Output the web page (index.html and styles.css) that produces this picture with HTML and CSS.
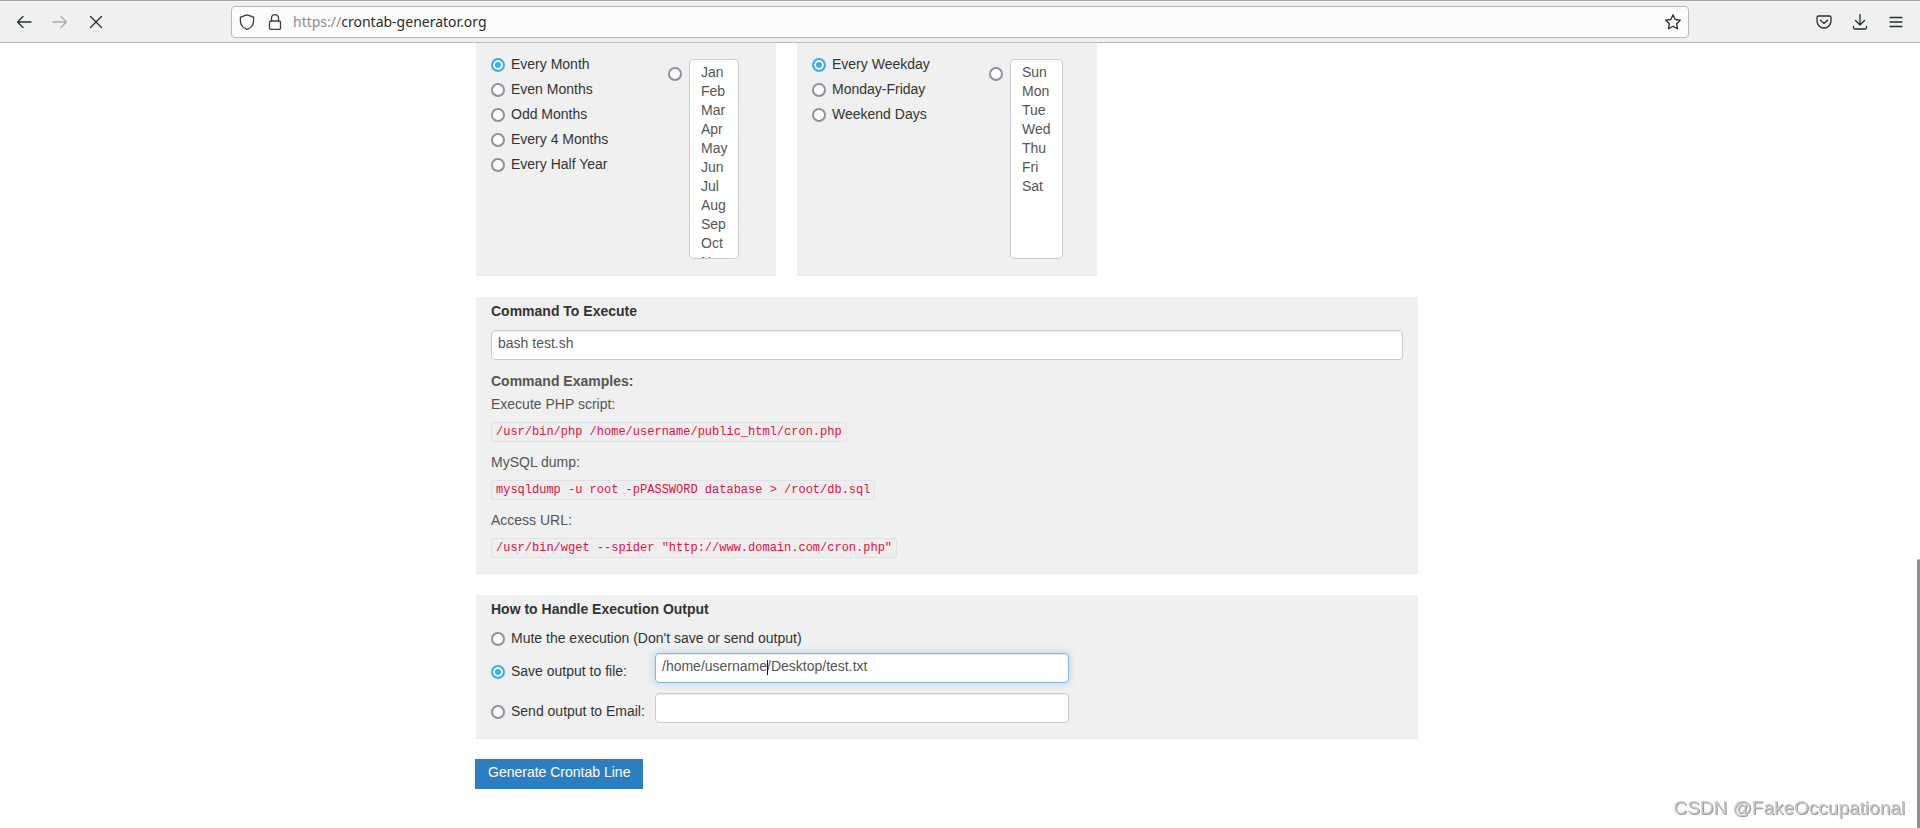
FILE: index.html
```html
<!DOCTYPE html>
<html lang="en">
<head>
<meta charset="utf-8">
<title>Crontab Generator</title>
<link rel="stylesheet" href="styles.css">
</head>
<body>
<header class="toolbar">
  <nav class="nav-buttons" aria-label="Navigation">
    <button class="icon-button" type="button" aria-label="Back"><svg viewBox="0 0 16 16"><path d="M15 8H1.5M7 2.5 1.5 8 7 13.5"/></svg></button>
    <button class="icon-button" type="button" aria-label="Forward" disabled><svg viewBox="0 0 16 16"><path d="M1 8h13.500M9 2.500 14.500 8 9 13.500"/></svg></button>
    <button class="icon-button" type="button" aria-label="Stop"><svg viewBox="0 0 16 16"><path d="m2.500 2.500 11 11M13.500 2.500l-11 11"/></svg></button>
  </nav>
  <div class="address-bar">
    <svg class="icon" viewBox="0 0 16 16"><path d="M8 .8 14.600 3.200v3.300c0 4-2.600 7.400-6.600 8.900-4-1.500-6.600-4.900-6.600-8.900V3.200z"/></svg>
    <svg class="icon" viewBox="0 0 16 16"><rect x="2.500" y="7" width="11" height="8.500" rx="1.500"/><path d="M4.500 7V4a3.500 3.500 0 0 1 7 0v3"/></svg>
    <div class="address" role="textbox" aria-label="Address" contenteditable="true" spellcheck="false"><span class="scheme">https://</span>crontab-generator.org</div>
    <button class="icon-button" type="button" aria-label="Bookmark this page"><svg viewBox="0 0 16 16"><path d="m8 .9 2.200 4.600 5 .7-3.600 3.500.9 5-4.500-2.400-4.500 2.400.9-5L.8 6.200l5-.7z"/></svg></button>
  </div>
  <div class="tool-buttons">
    <button class="icon-button" type="button" aria-label="Save to Pocket"><svg viewBox="0 0 16 16"><path d="M2.500 2h11A1.500 1.500 0 0 1 15 3.500V7A7 7 0 0 1 1 7V3.500A1.500 1.500 0 0 1 2.500 2zM4.500 6.300 8 9.500l3.500-3.200"/></svg></button>
    <button class="icon-button" type="button" aria-label="Downloads"><svg viewBox="0 0 16 16"><path d="M8 .5v10.500M3.500 6.500 8 11l4.500-4.500M1.500 12.500v1a1.500 1.500 0 0 0 1.500 1.500h10a1.500 1.500 0 0 0 1.500-1.500v-1"/></svg></button>
    <button class="icon-button" type="button" aria-label="Menu"><svg viewBox="0 0 16 16"><path d="M2 3.500h12M2 8h12M2 12.500h12"/></svg></button>
  </div>
</header>

<main class="page">
  <form>
    <div class="schedule">
      <section class="panel schedule-panel">
        <div class="choices">
          <label class="choice"><input type="radio" name="month" checked>Every Month</label>
          <label class="choice"><input type="radio" name="month">Even Months</label>
          <label class="choice"><input type="radio" name="month">Odd Months</label>
          <label class="choice"><input type="radio" name="month">Every 4 Months</label>
          <label class="choice"><input type="radio" name="month">Every Half Year</label>
        </div>
        <div class="pick">
          <input type="radio" name="month" aria-label="Selected months">
          <select class="list" multiple size="10" aria-label="Months">
            <option>Jan</option><option>Feb</option><option>Mar</option><option>Apr</option><option>May</option><option>Jun</option><option>Jul</option><option>Aug</option><option>Sep</option><option>Oct</option><option>Nov</option><option>Dec</option>
          </select>
        </div>
      </section>
      <section class="panel schedule-panel">
        <div class="choices">
          <label class="choice"><input type="radio" name="weekday" checked>Every Weekday</label>
          <label class="choice"><input type="radio" name="weekday">Monday-Friday</label>
          <label class="choice"><input type="radio" name="weekday">Weekend Days</label>
        </div>
        <div class="pick">
          <input type="radio" name="weekday" aria-label="Selected weekdays">
          <select class="list" multiple size="10" aria-label="Weekdays">
            <option>Sun</option><option>Mon</option><option>Tue</option><option>Wed</option><option>Thu</option><option>Fri</option><option>Sat</option>
          </select>
        </div>
      </section>
    </div>

    <section class="panel">
      <label class="heading" for="command">Command To Execute</label>
      <input class="field" id="command" type="text" value="bash test.sh">
      <div class="examples">
        <strong>Command Examples:</strong>
        <p>Execute PHP script:</p>
        <code>/usr/bin/php /home/username/public_html/cron.php</code>
        <p>MySQL dump:</p>
        <code>mysqldump -u root -pPASSWORD database &gt; /root/db.sql</code>
        <p>Access URL:</p>
        <code>/usr/bin/wget --spider "http://www.domain.com/cron.php"</code>
      </div>
    </section>

    <section class="panel output-panel">
      <h2 class="heading">How to Handle Execution Output</h2>
      <label class="choice mute"><input type="radio" name="output">Mute the execution (Don't save or send output)</label>
      <div class="output-grid">
        <label class="choice"><input type="radio" name="output" checked>Save output to file:</label>
        <div class="file-field">
          <input class="field active" type="text" aria-label="Output file" value="/home/username/Desktop/test.txt">
          <span class="caret"></span>
        </div>
        <label class="choice"><input type="radio" name="output">Send output to Email:</label>
        <input class="field" type="email" aria-label="Email">
      </div>
    </section>

    <button class="submit" type="button">Generate Crontab Line</button>
  </form>
</main>
<div class="scroll-thumb"></div>
<div class="watermark">CSDN @FakeOccupational</div>
</body>
</html>
```

FILE: styles.css
```css
* { box-sizing: border-box; }

body {
  margin: 0;
  min-height: 100vh;
  overflow: hidden;
  background: #fff;
  color: #333;
  font: 14px/20px "Liberation Sans", Arial, sans-serif;
}

button, input, select { font: inherit; color: inherit; }

/* Browser toolbar */
.toolbar {
  display: grid;
  grid-template-columns: 231px minmax(0, 1fr) 231px;
  align-items: center;
  height: 43px;
  padding-top: 1px;
  background: #eff0f2;
  border-top: 1px solid #a2a4a4;
  border-bottom: 1px solid #b9bbbd;
  box-shadow: inset 0 1px #fbfbfb;
}

.nav-buttons { display: flex; gap: 20px; padding-left: 16px; }
.tool-buttons { display: flex; gap: 20px; justify-content: flex-end; padding-right: 16px; }

.icon-button {
  display: flex;
  padding: 0;
  border: 0;
  background: none;
  color: #2a2c2e;
}
.icon-button:disabled { color: #a9abad; }

svg {
  width: 16px;
  height: 16px;
  fill: none;
  stroke: currentColor;
  stroke-width: 1.3;
  stroke-linecap: round;
  stroke-linejoin: round;
}
.icon { color: #3c3e40; margin-right: 12px; }

.address-bar {
  display: flex;
  align-items: center;
  height: 32px;
  padding: 0 7px;
  background: #fcfcfc;
  border: 1px solid #b9bbbb;
  border-radius: 4px;
}
.icon + .icon { margin-right: 10px; }
.address {
  flex: 1;
  color: #2a2c2e;
  font: 14px/20px "Noto Sans", sans-serif;
}
.scheme { color: #8c8d8e; }

/* Page */
.page {
  max-width: 1170px;
  margin: 0 auto;
  padding: 0 127px 0 101px;
}

.schedule {
  display: grid;
  grid-template-columns: repeat(3, minmax(0, 1fr));
  gap: 21px;
}

.panel {
  margin-bottom: 21px;
  padding: 4px 15px 15px;
  background: #f0f0f0;
  border-bottom: 1px solid #e8e8e8;
}
.schedule-panel {
  display: grid;
  grid-template-columns: 177px 1fr;
  padding: 11px 15px 16px;
}
.output-panel { margin-bottom: 20px; }

.choices { display: flex; flex-direction: column; gap: 5px; }
.choice { display: flex; align-items: center; gap: 6px; }

input[type="radio"] {
  appearance: none;
  flex: none;
  width: 14px;
  height: 14px;
  margin: 0;
  background: #fff;
  border: 2px solid #8f8f9d;
  border-radius: 50%;
}
.choice input[type="radio"] { margin-top: 2px; }
input[type="radio"]:checked {
  background: #3daee9;
  border-color: #3daee9;
  box-shadow: inset 0 0 0 2px #fff;
}

.pick { display: flex; align-items: flex-start; gap: 7px; padding-top: 5px; }
.pick input[type="radio"] { margin-top: 8px; }

.list {
  height: 200px;
  padding: 4px 0;
  overflow: hidden;
  color: #555;
  background: #fff;
  border: 1px solid #ccc;
  border-radius: 4px;
  scrollbar-width: none;
}
.list option { min-height: 19px; padding: 0 11px; line-height: 19px; }

.heading {
  display: block;
  margin: 0;
  font-size: 14px;
  line-height: 20px;
  font-weight: bold;
}

.field {
  display: block;
  width: 100%;
  height: 30px;
  padding: 3px 6px 7px;
  color: #555;
  background: #fff;
  border: 1px solid #ccc;
  border-radius: 4px;
  outline: 0;
  box-shadow: inset 0 1px 1px rgba(0, 0, 0, .075);
}
#command { margin-top: 9px; }
.active {
  border-color: #7fb9e8;
  box-shadow: inset 0 1px 1px rgba(0, 0, 0, .075), 0 0 8px rgba(82, 168, 236, .4);
}

.examples { padding-top: 11px; color: #555; }
.examples strong { display: block; }
.examples p { margin: 0 0 8px; padding-top: 3px; }
.examples code {
  display: block;
  width: fit-content;
  margin-bottom: 7px;
  padding: 0 4px;
  color: #dd1144;
  background: #eeeeef;
  border: 1px solid #e1e1e8;
  border-radius: 3px;
  font: 12px/18px "Liberation Mono", monospace;
}
.examples code:last-child { margin-bottom: 0; }

.mute { margin-top: 9px; }
.output-grid {
  display: grid;
  grid-template-columns: 164px minmax(0, 414px);
  align-items: center;
  row-gap: 10px;
  padding-top: 5px;
}
.output-grid .choice { padding-top: 6px; }
.file-field { position: relative; }
.caret {
  position: absolute;
  top: 7px;
  left: 112px;
  width: 1px;
  height: 15px;
  background: #111;
}

.submit {
  display: block;
  margin-left: -1px;
  padding: 3px 13px 7px;
  color: #fff;
  background: #2d7ec1;
  border: 0;
}

.scroll-thumb {
  position: fixed;
  top: 559px;
  right: 0;
  bottom: 0;
  width: 3px;
  background: #8f8f8f;
  border-radius: 2px 2px 0 0;
}

.watermark {
  position: fixed;
  right: 15px;
  bottom: 8px;
  color: #c8c8c8;
  font-size: 19px;
  line-height: 24px;
  text-shadow: 1px 1px 0 #999;
}
```
